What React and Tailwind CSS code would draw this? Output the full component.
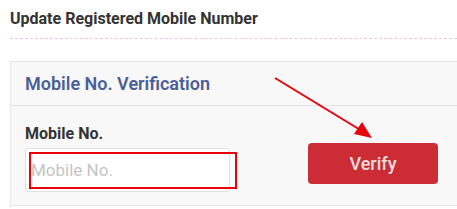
import React from "react";

const App = () => {
  return (
    <div className="relative w-[457px] h-[209px] overflow-hidden bg-white font-['Roboto',sans-serif]">
      {/* TITLE */}
      <div className="pl-[10px] pt-[8px]">
        <h1 className="text-[16px] leading-[22px] font-bold text-[#333]">Update Registered Mobile Number</h1>
      </div>
      <div className="ml-[10px] mt-[8px] border-t border-dashed border-[#f3c9d9]"></div>

      {/* PANEL */}
      <div className="ml-[10px] mt-[22px] w-[460px] bg-[#f8f8f8] border border-[#e6e6e6]">
        <div className="h-[44px] flex items-center pl-[14px] border-b border-[#e2e2e2]">
          <span className="text-[18px] font-semibold text-[#4b5f97]">Mobile No. Verification</span>
        </div>
        <div className="flex items-start pl-[14px] pt-[19px] h-[99px]">
          <div className="w-[205px]">
            <div className="text-[16px] leading-[18px] font-bold text-[#333]">Mobile No.</div>
            <input
              placeholder="Mobile No."
              className="mt-[5px] w-[205px] h-[44px] px-[5px] bg-white border border-[#e0e0e0] rounded-[3px] text-[17px] placeholder:text-[#c4c4c4] outline-none"
            />
          </div>
          <button className="ml-[78px] mt-[18px] w-[130px] h-[41px] bg-[#cc2d34] rounded-[4px] text-[18px] font-medium text-[#f3dede]">
            Verify
          </button>
        </div>
      </div>

      {/* ANNOTATIONS */}
      <div className="absolute left-[29px] top-[152px] w-[208px] h-[37px] border-2 border-[#e8000a]"></div>
      <svg className="absolute left-0 top-0" width="457" height="209">
        <line x1="275" y1="78" x2="362" y2="131" stroke="#e8000a" strokeWidth="2" />
        <polygon points="372,138 354,134 362,122" fill="#e8000a" />
      </svg>
    </div>
  );
};

export default App;
